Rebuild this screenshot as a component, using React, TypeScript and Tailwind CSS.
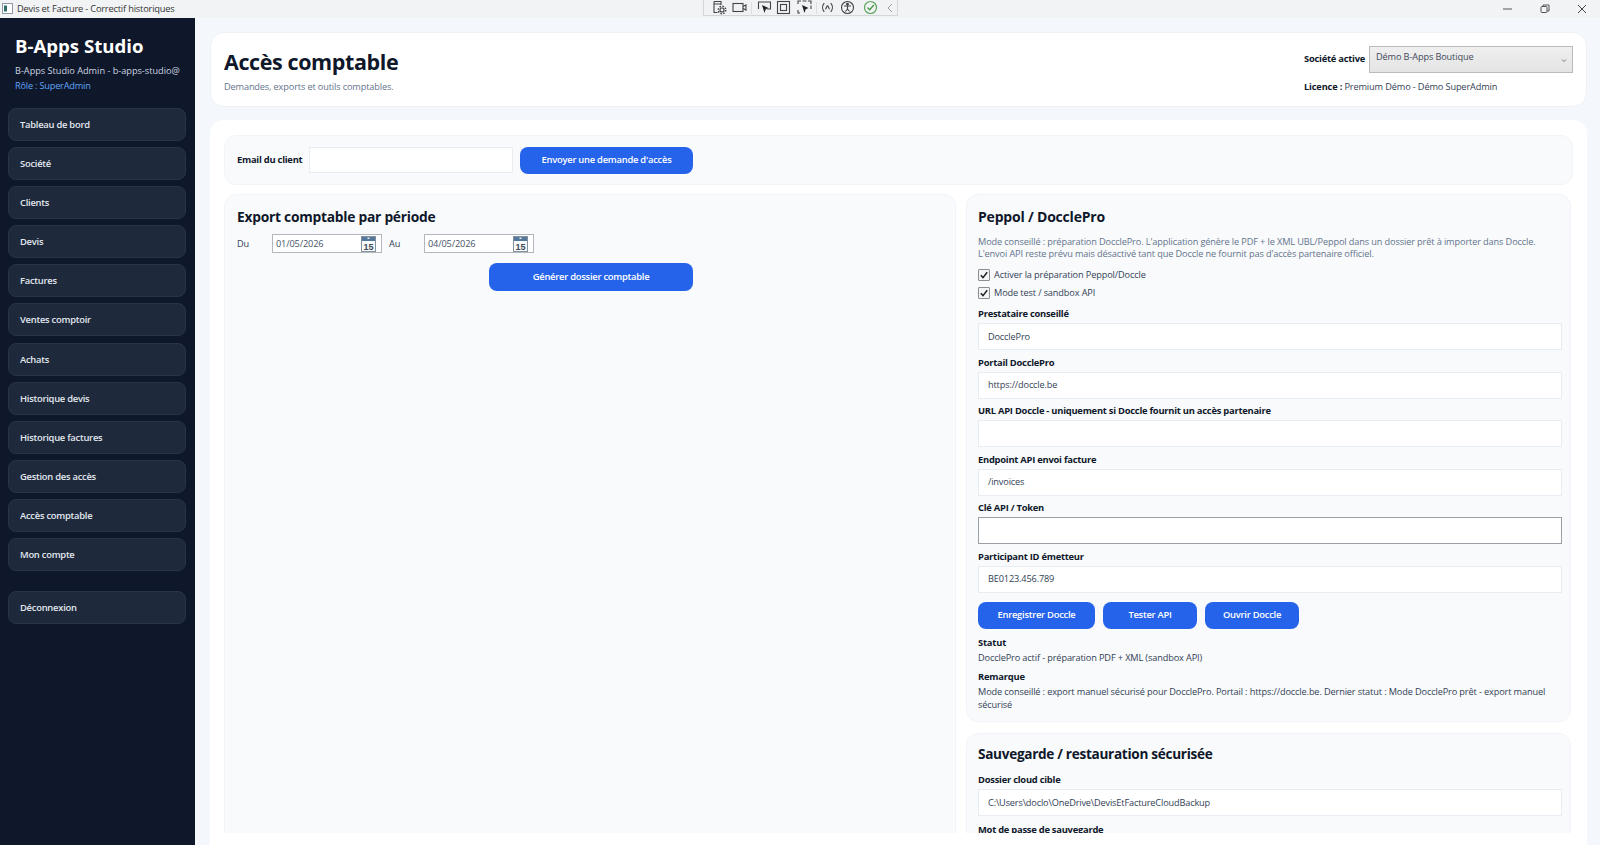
const FONT = "font-['Open_Sans','Noto_Sans',sans-serif]";

const nav = ["Tableau de bord","Société","Clients","Devis","Factures","Ventes comptoir","Achats","Historique devis","Historique factures","Gestion des accès","Accès comptable","Mon compte"];

function NavBtn({ label, className = "" }: { label: string; className?: string }) {
  return (
    <div className={`h-[33px] shrink-0 flex items-center pl-[11px] pt-px rounded-lg bg-[#1e293b] border border-[#273449] text-[9.4px] tracking-[-0.25px] font-semibold text-[#e2e8f0] ${className}`}>
      {label}
    </div>
  );
}

function Btn({ label, className = "" }: { label: string; className?: string }) {
  return (
    <div className={`flex items-center justify-center rounded-lg bg-[#2563eb] text-white text-[9.4px] tracking-[-0.25px] font-semibold ${className}`}>
      {label}
    </div>
  );
}

function Field({ label, value = "", strong = false, className = "" }: { label: string; value?: string; strong?: boolean; className?: string }) {
  return (
    <div className={`flex flex-col ${className}`}>
      <div className="h-[15px] leading-[15px] text-[9.4px] tracking-[-0.25px] font-bold text-[#0f172a] mb-[2px]">{label}</div>
      <div className={`h-[27px] flex items-center pl-[9px] bg-white text-[9.2px] tracking-[-0.16px] text-[#334155] border ${strong ? "border-[#9aa0a6]" : "border-[#e8edf3]"}`}>{value}</div>
    </div>
  );
}

function Check({ label }: { label: string }) {
  return (
    <div className="h-[18px] flex items-center gap-[4px] text-[9.2px] tracking-[-0.13px] text-[#334155]">
      <div className="w-[12px] h-[12px] border border-[#8a8f96] bg-[#f3f4f6] rounded-[1px] flex items-center justify-center">
        <svg width="10" height="10" viewBox="0 0 10 10"><path d="M1.8 5.2 4 7.6 8.2 2.2" fill="none" stroke="#222" strokeWidth="1.5" /></svg>
      </div>
      {label}
    </div>
  );
}

function Calendar() {
  return (
    <svg width="15" height="16" viewBox="0 0 15 16">
      <rect x="0.5" y="0.5" width="14" height="15" fill="#f8fafc" stroke="#8592a0" />
      <rect x="1" y="1" width="13" height="4" fill="#54789c" />
      <rect x="6.500" y="1.500" width="2" height="1.500" fill="#e6edf4" />
      <text x="7.500" y="14" textAnchor="middle" fontSize="9" fontWeight="700" fill="#3c4a58" fontFamily="Liberation Sans">15</text>
    </svg>
  );
}

function DateBox({ value }: { value: string }) {
  return (
    <div className="w-[110px] h-[19px] flex items-center justify-between pl-[3px] pr-[5px] bg-white border border-[#b4b8bd] text-[9.2px] tracking-[-0.13px] text-[#475569]">
      {value}
      <Calendar />
    </div>
  );
}

function Toolbar() {
  const s = { fill: "none", stroke: "#444", strokeWidth: 1.1 };
  return (
    <div className="absolute top-0 left-[703px] w-[195px] h-[16px] flex items-center pl-[7.900px] bg-[#f1f2f4] border-x border-b border-[#d4d6d9]">
      <svg width="15" height="15" viewBox="0 0 15 15" {...s}><path d="M2 1.500h7v3.500M2 1.500v11h3.500M2 4h7" /><circle cx="10" cy="10" r="2" /><circle cx="10" cy="10" r="3.700" strokeDasharray="1.500 1.400" strokeWidth="1.500" /></svg>
      <svg className="ml-[5.400px]" width="15" height="15" viewBox="0 0 15 15" {...s}><rect x="1" y="3.500" width="10" height="8" /><path d="M11 6.500l3-1.500v5l-3-1.500" /></svg>
      <div className="ml-[4px] w-px h-[12px] bg-[#dcdee1]" />
      <svg className="ml-[4.500px]" width="15" height="15" viewBox="0 0 15 15" {...s}><path d="M1.500 9V2h12v7H10" /><path d="M5 5l6.500 3-2.800 1.200L7.500 13z" fill="#222" stroke="none" /></svg>
      <svg className="ml-[4.400px]" width="15" height="15" viewBox="0 0 15 15" {...s}><rect x="1.500" y="1.500" width="12" height="12" /><rect x="4.500" y="4.500" width="6" height="6" /></svg>
      <svg className="ml-[5.400px]" width="15" height="15" viewBox="0 0 15 15" {...s}><path d="M1 4V1h3M11 1h3v3M1 10v3h2M14 9V5.500M5.500 1h4" /><path d="M5 5l6.500 3-2.800 1.200L7.500 13z" fill="#222" stroke="none" /></svg>
      <div className="ml-[4px] w-px h-[12px] bg-[#dcdee1]" />
      <svg className="ml-[4.500px]" width="13" height="13" viewBox="0 0 12 12" {...s}><path d="M3 2C1 4.300 1 7.700 3 10M9 2c2 2.300 2 5.700 0 8M4 7.500c1-.2 1-2.800 2-3s1 2.800 2 3" /></svg>
      <svg className="ml-[6.400px]" width="15" height="15" viewBox="0 0 15 15" {...s}><circle cx="7.500" cy="7.500" r="6" /><circle cx="7.500" cy="4.300" r="0.900" fill="#444" /><path d="M4 6h7M7.500 6v3M7.500 9l-2 2.500M7.500 9l2 2.500" /></svg>
      <svg className="ml-[7.400px]" width="15" height="15" viewBox="0 0 15 15" fill="none"><circle cx="7.500" cy="7.500" r="6" stroke="#5aa55a" strokeWidth="1.200" /><path d="M4.500 7.500l2.200 2.200L10.800 5" stroke="#3f9a3f" strokeWidth="1.300" /></svg>
      <svg className="ml-[7.900px]" width="8" height="12" viewBox="0 0 8 12" fill="none"><path d="M6 2 2 6l4 4" stroke="#9a9fa5" strokeWidth="1" /></svg>
    </div>
  );
}

export default function App() {
  return (
    <div className={`relative w-[1600px] h-[845px] overflow-hidden flex flex-col bg-[#f4f7fb] ${FONT}`}>
      <div className="h-[17.5px] shrink-0 bg-[#f1f3f5] flex items-center text-[9.3px] tracking-[-0.2px] text-[#333]">
        <svg className="ml-[2px] mr-[4px]" width="11" height="11" viewBox="0 0 11 11">
          <rect x="0.500" y="0.500" width="10" height="10" fill="#fff" stroke="#8d99a5" />
          <rect x="2" y="2.500" width="3" height="6" fill="#2f6f6f" />
        </svg>
        <span>Devis et Facture - Correctif historiques</span>
        <div className="ml-auto flex items-center gap-[27px] pr-[13px]">
          <svg width="10" height="10" viewBox="0 0 10 10"><path d="M0 5h9" stroke="#555" strokeWidth="1" /></svg>
          <svg width="10" height="10" viewBox="0 0 10 10" fill="none" stroke="#555"><rect x="1" y="2.500" width="6" height="6" rx="1" /><path d="M3 2.500V1h6v6H7" /></svg>
          <svg width="10" height="10" viewBox="0 0 10 10"><path d="M1 1l8 8M9 1l-8 8" stroke="#444" strokeWidth="1" /></svg>
        </div>
      </div>
      <Toolbar />

      <div className="flex-1 min-h-0 flex">
        <aside className="w-[195px] shrink-0 bg-[#0f172a] pl-2 pr-[9px] flex flex-col">
          <div className="pl-[7px] pt-[16.500px] h-[90.500px]">
            <div className="text-[18.6px] leading-[24px] font-bold text-white">B-Apps Studio</div>
            <div className="mt-[5px] text-[9.2px] tracking-[-0.02px] leading-[15px] text-[#cbd5e1] whitespace-nowrap">B-Apps Studio Admin - b-apps-studio@</div>
            <div className="text-[9.2px] tracking-[-0.2px] leading-[15px] text-[#60a5fa]">Rôle : SuperAdmin</div>
          </div>
          <div className="flex flex-col gap-[6.100px]">
            {nav.map((n) => <NavBtn key={n} label={n} />)}
          </div>
          <NavBtn label="Déconnexion" className="mt-[20px]" />
        </aside>

        <main className="flex-1 min-w-0 pl-[15px] pr-[13px] pt-[14.500px] flex flex-col">
          <header className="h-[75px] shrink-0 rounded-[14px] bg-white border border-[#eef2f6] flex justify-between pl-[13px] pr-[13px]">
            <div>
              <div className="mt-[14px] text-[21.5px] tracking-[-0.4px] leading-[30px] font-bold text-[#0f172a]">Accès comptable</div>
              <div className="mt-[3px] text-[9.2px] tracking-[-0.14px] leading-[14px] text-[#64748b]">Demandes, exports et outils comptables.</div>
            </div>
            <div className="w-[269px] pt-[13px]">
              <div className="flex items-center">
                <div className="w-[65px] whitespace-nowrap text-[9.4px] tracking-[-0.25px] font-bold text-[#0f172a]">Société active</div>
                <div className="relative w-[204px] h-[27px] pl-[6px] pt-[3px] bg-linear-to-b from-[#efefef] to-[#e4e4e4] border border-[#b8bbbf] text-[9.2px] tracking-[-0.13px] text-[#3f4a5a]">
                  Démo B-Apps Boutique
                  <svg className="absolute right-[5px] top-[11px]" width="6" height="5" viewBox="0 0 6 5"><path d="M1 1.500 3 3.500 5 1.500" fill="none" stroke="#777" /></svg>
                </div>
              </div>
              <div className="mt-[6.500px] text-[9.2px] tracking-[-0.13px] leading-[14px] text-[#334155] whitespace-nowrap"><b className="text-[#0f172a]">Licence :</b> Premium Démo - Démo SuperAdmin</div>
            </div>
          </header>

          <section className="flex-1 min-h-0 mt-[13px] rounded-t-[14px] bg-white px-[14px] pt-[15px] pb-3 flex flex-col">
            <div className="flex-1 min-h-0 overflow-hidden flex flex-col gap-[9px]">
              <div className="h-[50px] shrink-0 rounded-xl bg-[#f8fafc] border border-[#f1f5f9] flex items-center pl-[12px]">
                <div className="w-[72px] whitespace-nowrap text-[9.4px] tracking-[-0.25px] font-bold text-[#0f172a]">Email du client</div>
                <div className="w-[204px] h-[26px] bg-white border border-[#e8edf3]" />
                <Btn label="Envoyer une demande d'accès" className="ml-[7px] w-[173px] h-[27px]" />
              </div>

              <div className="grid grid-cols-[732px_605px] gap-x-[10px] items-start">
                <div className="h-[670px] rounded-xl bg-[#f8fafc] border border-[#f1f5f9] px-[12px]">
                  <div className="mt-[12px] text-[13.8px] tracking-[-0.25px] leading-[20px] font-bold text-[#0f172a]">Export comptable par période</div>
                  <div className="mt-[7px] flex items-center text-[9.2px] tracking-[-0.13px] text-[#334155]">
                    <div className="w-[35px]">Du</div>
                    <DateBox value="01/05/2026" />
                    <div className="w-[42px] pl-[7px]">Au</div>
                    <DateBox value="04/05/2026" />
                  </div>
                  <div className="mt-[10px] flex">
                    <Btn label="Générer dossier comptable" className="ml-[252px] w-[204px] h-[28px]" />
                  </div>
                </div>

                <div className="flex flex-col gap-[11px]">
                  <div className="h-[528px] rounded-xl bg-[#f8fafc] border border-[#f1f5f9] px-[11px]">
                    <div className="mt-[12px] text-[14px] tracking-[-0.2px] leading-[20px] font-bold text-[#0f172a]">Peppol / DocclePro</div>
                    <div className="mt-[9px] text-[9.2px] tracking-[-0.125px] leading-[12px] text-[#64748b] whitespace-nowrap">
                      <div>Mode conseillé : préparation DocclePro. L'application génère le PDF + le XML UBL/Peppol dans un dossier prêt à importer dans Doccle.</div>
                      <div>L'envoi API reste prévu mais désactivé tant que Doccle ne fournit pas d'accès partenaire officiel.</div>
                    </div>
                    <div className="mt-[5.500px]">
                      <Check label="Activer la préparation Peppol/Doccle" />
                      <Check label="Mode test / sandbox API" />
                    </div>
                    <div className="mt-[4.500px] flex flex-col gap-[4.500px] w-[584px]">
                      <Field label="Prestataire conseillé" value="DocclePro" />
                      <Field label="Portail DocclePro" value="https://doccle.be" />
                      <Field label="URL API Doccle - uniquement si Doccle fournit un accès partenaire" />
                      <Field label="Endpoint API envoi facture" value="/invoices" />
                      <Field label="Clé API / Token" strong />
                      <Field label="Participant ID émetteur" value="BE0123.456.789" />
                    </div>
                    <div className="mt-[9px] flex gap-2">
                      <Btn label="Enregistrer Doccle" className="w-[117px] h-[27px]" />
                      <Btn label="Tester API" className="w-[94px] h-[27px]" />
                      <Btn label="Ouvrir Doccle" className="w-[94px] h-[27px]" />
                    </div>
                    <div className="mt-[6px] text-[9.4px] tracking-[-0.2px] leading-[15px] font-bold text-[#0f172a]">Statut</div>
                    <div className="text-[9.2px] tracking-[-0.13px] leading-[16px] text-[#334155]">DocclePro actif - préparation PDF + XML (sandbox API)</div>
                    <div className="mt-[3.500px] text-[9.4px] tracking-[-0.2px] leading-[15px] font-bold text-[#0f172a]">Remarque</div>
                    <div className="mt-[2px] text-[9.2px] tracking-[-0.13px] leading-[12.500px] text-[#334155]">Mode conseillé : export manuel sécurisé pour DocclePro. Portail : https://doccle.be. Dernier statut : Mode DocclePro prêt - export manuel sécurisé</div>
                  </div>

                  <div className="h-[170px] rounded-xl bg-[#f8fafc] border border-[#f1f5f9] px-[11px]">
                    <div className="mt-[10px] text-[13.6px] tracking-[-0.3px] leading-[20px] font-bold text-[#0f172a]">Sauvegarde / restauration sécurisée</div>
                    <Field label="Dossier cloud cible" value="C:\Users\doclo\OneDrive\DevisEtFactureCloudBackup" className="mt-[8px] w-[584px]" />
                    <Field label="Mot de passe de sauvegarde" className="mt-[6px] w-[584px]" />
                  </div>
                </div>
              </div>
            </div>
          </section>
        </main>
      </div>
    </div>
  );
}
